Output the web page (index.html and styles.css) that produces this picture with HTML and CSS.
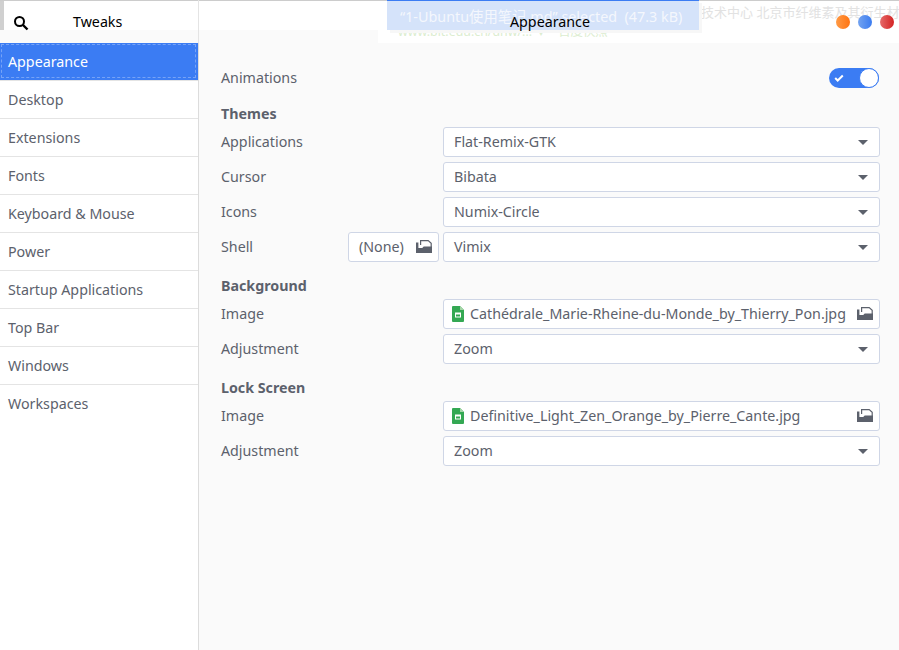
FILE: index.html
```html
<!DOCTYPE html>
<html lang="en">
<head>
  <meta charset="UTF-8">
  <title>Tweaks</title>
  <link rel="stylesheet" href="styles.css">
</head>
<body>
  <svg class="defs" width="0" height="0">
    <symbol id="folder" viewBox="0 0 16 16">
      <path d="M4.600 6V1.600h7.600l3 2.600v4" fill="none" stroke="#5c616c" stroke-width="1.200"/>
      <path d="M0 3.500h2.400v5.500h3.800L7.700 7.500H16v6.500H0z" fill="#5c616c"/>
    </symbol>
    <symbol id="file" viewBox="0 0 12 16">
      <path d="M1 0h7l4 4v11a1 1 0 0 1-1 1H1a1 1 0 0 1-1-1V1a1 1 0 0 1 1-1z" fill="#34a853"/>
      <path d="M8 0l4 4H8z" fill="#a5d6a7"/>
      <rect x="3" y="6.500" width="6" height="5" fill="#fff"/>
      <rect x="4" y="8.500" width="4" height="2" fill="#34a853"/>
    </symbol>
  </svg>

  <header class="titlebar">
    <div class="ghost">
      <div class="ghost-line"></div>
      <div class="ghost-left"></div>
      <div class="ghost-link">www.bit.edu.cn/dnw/...&nbsp;&nbsp;▾&nbsp;&nbsp;-&nbsp;百度快照</div>
      <div class="ghost-text">数技术中心 北京市纤维素及其衍生材料</div>
      <div class="ghost-bar">“1-Ubuntu使用笔记.md” selected  (47.3 kB)</div>
    </div>
    <div class="titlebar-left">
      <svg class="search-icon" width="16" height="16" viewBox="0 0 16 16">
        <circle cx="6.500" cy="6.500" r="4.500" fill="none" stroke="#000" stroke-width="2"/>
        <path d="M10 10l4.500 4.500" stroke="#000" stroke-width="2.400"/>
      </svg>
      <span class="app-name">Tweaks</span>
    </div>
    <div class="titlebar-right">
      <span class="page-name">Appearance</span>
      <div class="wm-buttons">
        <span class="wm-btn orange"></span>
        <span class="wm-btn blue"></span>
        <span class="wm-btn red"></span>
      </div>
    </div>
  </header>

  <div class="main">
    <ul class="sidebar">
      <li class="active"><span>Appearance</span></li>
      <li><span>Desktop</span></li>
      <li><span>Extensions</span></li>
      <li><span>Fonts</span></li>
      <li><span>Keyboard &amp; Mouse</span></li>
      <li><span>Power</span></li>
      <li><span>Startup Applications</span></li>
      <li><span>Top Bar</span></li>
      <li><span>Windows</span></li>
      <li><span>Workspaces</span></li>
    </ul>

    <div class="content">
      <div class="row">
        <span class="label">Animations</span>
        <div class="switch">
          <svg width="10" height="8" viewBox="0 0 10 8"><path d="M1.200 4l2.500 2.500L8.800 1.500" fill="none" stroke="#fff" stroke-width="2"/></svg>
          <span class="knob"></span>
        </div>
      </div>

      <h3 class="heading first">Themes</h3>
      <div class="group">
        <div class="row"><span class="label">Applications</span><div class="control combo"><span class="value">Flat-Remix-GTK</span><i class="arrow"></i></div></div>
        <div class="row"><span class="label">Cursor</span><div class="control combo"><span class="value">Bibata</span><i class="arrow"></i></div></div>
        <div class="row"><span class="label">Icons</span><div class="control combo"><span class="value">Numix-Circle</span><i class="arrow"></i></div></div>
        <div class="row">
          <span class="label">Shell</span>
          <div class="none-btn"><span class="value">(None)</span><svg class="open-icon"><use href="#folder"/></svg></div>
          <div class="control combo"><span class="value">Vimix</span><i class="arrow"></i></div>
        </div>
      </div>

      <h3 class="heading">Background</h3>
      <div class="group">
        <div class="row"><span class="label">Image</span><div class="control chooser"><svg class="file-icon"><use href="#file"/></svg><span class="value file-name">Cathédrale_Marie-Rheine-du-Monde_by_Thierry_Pon.jpg</span><svg class="open-icon"><use href="#folder"/></svg></div></div>
        <div class="row"><span class="label">Adjustment</span><div class="control combo"><span class="value">Zoom</span><i class="arrow"></i></div></div>
      </div>

      <h3 class="heading">Lock Screen</h3>
      <div class="group">
        <div class="row"><span class="label">Image</span><div class="control chooser"><svg class="file-icon"><use href="#file"/></svg><span class="value file-name">Definitive_Light_Zen_Orange_by_Pierre_Cante.jpg</span><svg class="open-icon"><use href="#folder"/></svg></div></div>
        <div class="row"><span class="label">Adjustment</span><div class="control combo"><span class="value">Zoom</span><i class="arrow"></i></div></div>
      </div>
    </div>
  </div>
</body>
</html>
```

FILE: styles.css
```css
* { box-sizing: border-box; }

body {
  margin: 0;
  width: 899px;
  height: 650px;
  overflow: hidden;
  background: #fafafa;
  color: #5c616c;
  font-family: "Noto Sans", "Noto Sans CJK SC", sans-serif;
  font-size: 14.25px;
}

.defs { position: absolute; }

/* title bar, with the window behind showing through */
.titlebar {
  position: relative;
  display: flex;
  height: 43px;
  background: #fff;
  color: #000;
  overflow: hidden;
}

.ghost { position: absolute; inset: 0; }

.ghost-line {
  height: 1px;
  background: #ccc;
}

.ghost-left {
  position: absolute;
  left: 0;
  top: 30px;
  width: 378px;
  height: 13px;
  background: #fafafa;
}

.ghost-link {
  position: absolute;
  left: 398px;
  top: 22px;
  color: #dcedd0;
  font-size: 12.4px;
  white-space: nowrap;
}

.ghost-bar {
  position: absolute;
  left: 387px;
  top: 0;
  width: 312px;
  height: 30px;
  padding: 4px 0 0 13px;
  background: #d5e3fa;
  border-top: 1px solid #3b7cf3;
  box-shadow: 3px 3px 0 #f7f7f7;
  color: #f4f7fd;
  font-size: 14.35px;
  white-space: pre;
}

.ghost-text {
  position: absolute;
  left: 688px;
  top: 2px;
  color: #e2e2e2;
  font-size: 13px;
  white-space: nowrap;
}

.titlebar-left {
  position: relative;
  display: flex;
  align-items: center;
  width: 199px;
  padding: 2px 0 0 13px;
  border-right: 1px solid #e4e4e4;
}

.titlebar-left::before {
  content: "";
  position: absolute;
  left: 0;
  top: 1px;
  width: 4px;
  height: 29px;
  background: #d0d0d0;
}

.search-icon { flex: none; }

.app-name {
  margin-left: 44px;
  padding-bottom: 2px;
}

.titlebar-right {
  position: relative;
  flex: 1;
  display: flex;
  align-items: center;
  padding-top: 1px;
}

.page-name {
  margin-left: 311px;
  padding-bottom: 2px;
}

.wm-buttons {
  display: flex;
  gap: 8px;
  margin-left: auto;
  margin-right: 5px;
}

.wm-btn {
  width: 14px;
  height: 14px;
  border-radius: 50%;
}

.wm-btn.orange { background: linear-gradient(90deg, #ff9a45, #ff7412); }
.wm-btn.blue { background: linear-gradient(90deg, #73a3f0, #3b7cf0); }
.wm-btn.red { background: linear-gradient(90deg, #e56a6a, #d42222); }

/* body of the window */
.main {
  display: flex;
  height: 607px;
}

.sidebar {
  width: 199px;
  margin: 0;
  padding: 0;
  list-style: none;
  background: #fff;
  border-right: 1px solid #dcdcdc;
}

.sidebar li {
  display: flex;
  align-items: center;
  height: 38px;
  padding: 0 8px;
  border-bottom: 1px solid #e4e4e4;
}

.sidebar li:last-child { border-bottom-color: transparent; }

.sidebar li.active {
  position: relative;
  background: #3b7cf3;
  color: #fff;
}

.sidebar li.active::after {
  content: "";
  position: absolute;
  inset: 1px 2px 2px 1px;
  border: 1px dashed rgba(255, 255, 255, 0.3);
}

.content {
  flex: 1;
  padding: 20px 19px 0 22px;
}

.row {
  display: flex;
  align-items: center;
  height: 30px;
}

.label {
  flex: 1;
  padding-bottom: 2px;
}

.value { padding-bottom: 2px; }

.heading {
  height: 20px;
  margin: 14px 0 3px;
  font-size: 14.25px;
  line-height: 20px;
  font-weight: bold;
}

.heading.first { margin-top: 11px; }

.group {
  display: flex;
  flex-direction: column;
  gap: 5px;
}

.switch {
  display: flex;
  align-items: center;
  justify-content: space-between;
  width: 50px;
  height: 20px;
  margin-right: 1px;
  padding-left: 5px;
  background: #3b7cf3;
  border-radius: 10px;
}

.knob {
  width: 20px;
  height: 20px;
  background: #fff;
  border: 1px solid #3b7cf3;
  border-radius: 50%;
}

.control,
.none-btn {
  display: flex;
  align-items: center;
  height: 30px;
  background: #fff;
  border: 1px solid #cfd6e6;
  border-radius: 3px;
}

.control {
  flex: none;
  width: 437px;
}

.combo { padding: 0 11px 0 10px; justify-content: space-between; }

.arrow {
  width: 0;
  height: 0;
  border-left: 5px solid transparent;
  border-right: 5px solid transparent;
  border-top: 5px solid #5c616c;
}

.none-btn {
  flex: none;
  width: 91px;
  margin-right: 4px;
  padding: 0 6px 0 10px;
  justify-content: space-between;
}

.chooser { padding: 0 6px 0 8px; }

.file-icon {
  flex: none;
  width: 12px;
  height: 16px;
  margin-right: 6px;
}

.file-name {
  flex: 1;
  white-space: nowrap;
  overflow: hidden;
}

.open-icon {
  flex: none;
  width: 16px;
  height: 16px;
}
```
